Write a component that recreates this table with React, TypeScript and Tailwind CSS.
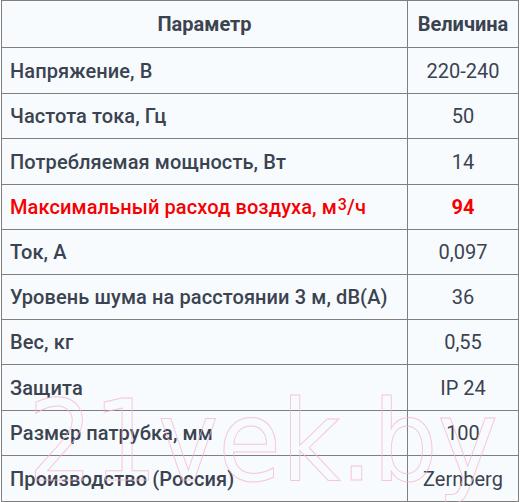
import React from "react";

const rows: { p: React.ReactNode; v: string; red?: boolean; h: number }[] = [
  { p: "Напряжение, В", v: "220-240", h: 46 },
  { p: "Частота тока, Гц", v: "50", h: 45 },
  { p: "Потребляемая мощность, Вт", v: "14", h: 46 },
  {
    p: (
      <>
        Максимальный расход воздуха, м<sup className="text-[0.8em] relative -top-[0.25em] ml-[1px]">3</sup>/ч
      </>
    ),
    v: "94",
    red: true,
    h: 45,
  },
  { p: "Ток, А", v: "0,097", h: 45 },
  { p: "Уровень шума на расстоянии 3 м, dB(A)", v: "36", h: 45 },
  { p: "Вес, кг", v: "0,55", h: 45 },
  { p: "Защита", v: "IP 24", h: 46 },
  { p: "Размер патрубка, мм", v: "100", h: 45 },
  { p: "Производство (Россия)", v: "Zernberg", h: 45 },
];

export default function App() {
  return (
    <div
      className="relative w-[520px] h-[502px] bg-white overflow-hidden"
      style={{ fontFamily: "Roboto, 'Noto Sans', sans-serif" }}
    >
      <div className="ml-[1px] w-[518px] border border-[#7f7f7f] bg-[#f7fbfe] text-[#3b4350] text-[20px]">
        <div className="flex h-[47px] border-b border-[#7f7f7f] font-bold">
          <div className="w-[406px] border-r border-[#7f7f7f] flex items-center justify-center">Параметр</div>
          <div className="flex-1 flex items-center justify-center">Величина</div>
        </div>
        {rows.map((r, i) => (
          <div
            key={i}
            className={`flex ${i < rows.length - 1 ? "border-b" : ""} border-[#7f7f7f] ${r.red ? "text-[#f70000]" : ""}`}
            style={{ height: r.h }}
          >
            <div className="w-[406px] border-r border-[#7f7f7f] flex items-center pl-[8px] font-medium whitespace-nowrap tracking-[0.1px]">
              <span>{r.p}</span>
            </div>
            <div className={`flex-1 flex items-center justify-center whitespace-nowrap ${r.red ? "font-bold" : ""}`}>{r.v}</div>
          </div>
        ))}
      </div>
      <svg className="absolute left-0 top-0 pointer-events-none" width="520" height="502">
        <text
          x="28"
          y="480"
          textLength="470"
          lengthAdjust="spacingAndGlyphs"
          fontFamily="'DejaVu Sans', sans-serif"
          fontSize="112"
          fill="none"
          stroke="#f7b4cc"
          strokeWidth="1"
          opacity="0.75"
        >
          21vek.by
        </text>
      </svg>
    </div>
  );
}
